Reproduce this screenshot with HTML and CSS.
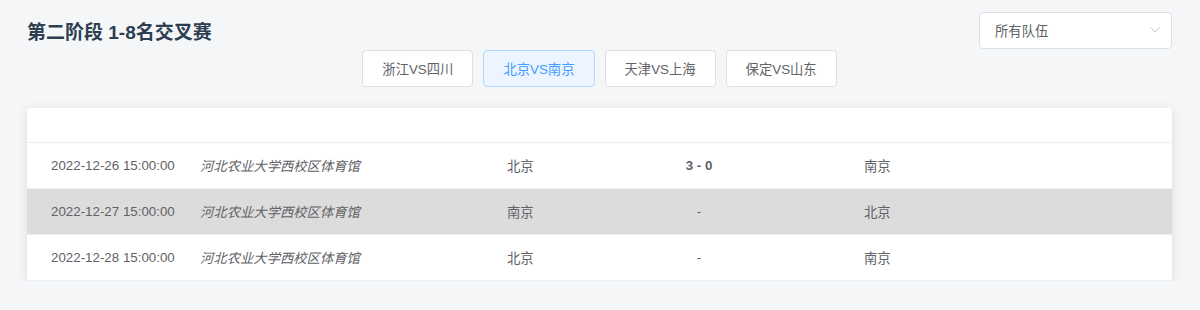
FILE: index.html
```html
<!DOCTYPE html>
<html>
<head>
<meta charset="utf-8">
<link rel="stylesheet" href="styles.css">
<title>第二阶段 1-8名交叉赛</title>
</head>
<body>
<div class="page">
  <div class="top">
    <h1 class="title">第二阶段 1-8名交叉赛</h1>
    <div class="select">
      <span>所有队伍</span>
      <svg class="arrow" width="10" height="6" viewBox="0 0 10 6"><polyline points="0.5,0.5 5,5 9.5,0.5" fill="none" stroke="#c0c4cc" stroke-width="1"/></svg>
    </div>
  </div>
  <div class="tabs">
    <span class="btn">浙江VS四川</span>
    <span class="btn active">北京VS南京</span>
    <span class="btn">天津VS上海</span>
    <span class="btn">保定VS山东</span>
  </div>
  <div class="card">
    <table class="games">
      <colgroup>
        <col class="c-date">
        <col class="c-venue">
        <col class="c-home">
        <col class="c-score">
        <col>
      </colgroup>
      <tr class="head"><th></th><th></th><th></th><th></th><th></th></tr>
      <tr>
        <td class="date">2022-12-26 15:00:00</td>
        <td class="venue">河北农业大学西校区体育馆</td>
        <td>北京</td>
        <td class="score"><b>3 - 0</b></td>
        <td class="away">南京</td>
      </tr>
      <tr class="hl">
        <td class="date">2022-12-27 15:00:00</td>
        <td class="venue">河北农业大学西校区体育馆</td>
        <td>南京</td>
        <td class="score">-</td>
        <td class="away">北京</td>
      </tr>
      <tr>
        <td class="date">2022-12-28 15:00:00</td>
        <td class="venue">河北农业大学西校区体育馆</td>
        <td>北京</td>
        <td class="score">-</td>
        <td class="away">南京</td>
      </tr>
    </table>
  </div>
</div>
</body>
</html>
```

FILE: styles.css
```css
html {
  font-family: "Liberation Sans", "Noto Sans CJK SC", sans-serif;
  background-color: #f5f6f8;
  color: #606266;
}
body {
  margin: 0;
}
.page {
  padding: 12px 28px 0 27px;
}
.top {
  display: flex;
  justify-content: space-between;
  align-items: center;
  height: 37px;
}
.title {
  margin: 0;
  font-size: 19px;
  font-weight: bold;
  color: #2c3e50;
}
.select {
  box-sizing: border-box;
  width: 193px;
  height: 37px;
  border: 1px solid #dcdfe6;
  border-radius: 4px;
  background: white;
  display: flex;
  align-items: center;
  justify-content: space-between;
  padding: 0 11px 0 15px;
  font-size: 13.33px;
}
.arrow {
  display: block;
  margin-top: -1px;
}
.tabs {
  display: flex;
  justify-content: center;
  gap: 10px;
  margin-top: 1px;
}
.btn {
  box-sizing: border-box;
  height: 37px;
  display: flex;
  align-items: center;
  padding: 0 19px;
  border: 1px solid #dcdfe6;
  border-radius: 4px;
  background: white;
  font-size: 13.33px;
  color: #606266;
}
.btn.active {
  background: #ecf5ff;
  border-color: #b3d8ff;
  color: #409eff;
}
.card {
  margin-top: 21px;
  background: white;
  border-radius: 4px;
  box-shadow: 0 2px 12px 0 rgba(0, 0, 0, 0.1);
  overflow: hidden;
}
.games {
  width: 100%;
  border-collapse: collapse;
  table-layout: fixed;
  font-size: 13.33px;
}
.c-date { width: 173px; }
.c-venue { width: 307px; }
.c-home { width: 92px; }
.c-score { width: 200px; }
.games th, .games td {
  padding: 0;
  border-bottom: 1px solid #ebeef5;
  text-align: left;
  white-space: nowrap;
}
.games th {
  height: 34px;
}
.games td {
  height: 45px;
}
.games td.date {
  padding-left: 24px;
}
.games td.venue {
  font-style: italic;
}
.games td.score {
  text-align: center;
}
.games td.away {
  padding-left: 65px;
}
.games tr.hl td {
  background: #dcdcdc;
}
```
